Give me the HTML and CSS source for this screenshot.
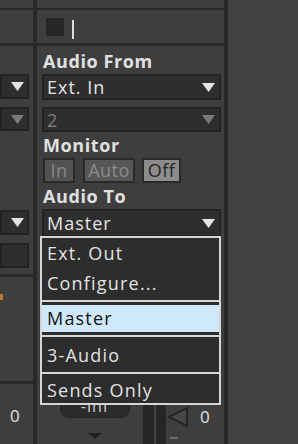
FILE: index.html
```html
<!DOCTYPE html>
<html>
<head>
<meta charset="utf-8">
<link rel="stylesheet" href="styles.css">
</head>
<body>
<div class="col-left">
  <div class="topgap"></div>
  <div class="hline2"></div>
  <div class="header"></div>
  <div class="hline3"></div>
  <div class="lsp1"></div>
  <div class="ldrop"><svg class="arrow" width="13" height="9" viewBox="0 0 13 9"><polygon points="0,0 13,0 6.5,9" fill="#e4e4e4"/></svg></div>
  <div class="ldrop dim"><svg class="arrow" width="13" height="9" viewBox="0 0 13 9"><polygon points="0,0 13,0 6.5,9" fill="#7a7a7a"/></svg></div>
  <div class="lsp2"></div>
  <div class="ldrop"><svg class="arrow" width="13" height="9" viewBox="0 0 13 9"><polygon points="0,0 13,0 6.5,9" fill="#e4e4e4"/></svg></div>
  <div class="ldrop empty"></div>
  <div class="lline a"></div>
  <div class="orange"></div>
  <div class="lline b"></div>
  <div class="lzero">0</div>
</div>
<div class="vsep"></div>
<div class="col-main">
  <div class="topgap"></div>
  <div class="hline2"></div>
  <div class="header">
    <div class="square"></div>
    <div class="cursor"></div>
  </div>
  <div class="hline3"></div>
  <div class="label first">Audio From</div>
  <div class="drop"><span>Ext. In</span><svg width="13" height="9" viewBox="0 0 13 9"><polygon points="0,0 13,0 6.5,9" fill="#e4e4e4"/></svg></div>
  <div class="drop dim"><span>2</span><svg width="13" height="9" viewBox="0 0 13 9"><polygon points="0,0 13,0 6.5,9" fill="#7a7a7a"/></svg></div>
  <div class="label">Monitor</div>
  <div class="btns">
    <div class="btn b-in">In</div>
    <div class="btn b-auto">Auto</div>
    <div class="btn b-off">Off</div>
  </div>
  <div class="label">Audio To</div>
  <div class="drop master"><span>Master</span><svg width="13" height="9" viewBox="0 0 13 9"><polygon points="0,0 13,0 6.5,9" fill="#e4e4e4"/></svg></div>
  <div class="bottom">
    <div class="pill">-inf</div>
    <div class="meter"><div class="mline"></div></div>
    <svg class="tri" width="22" height="22" viewBox="0 0 22 22"><polygon points="20,2 20,20 2,11" fill="#474747" stroke="#252525" stroke-width="2"/></svg>
    <div class="mzero">0</div>
    <svg class="down" width="14" height="6" viewBox="0 0 14 6"><polygon points="0,0 14,0 7,6" fill="#202020"/></svg>
    <div class="dash"></div>
  </div>
  <div class="menu">
    <div class="group">
      <div class="item">Ext. Out</div>
      <div class="item">Configure...</div>
    </div>
    <div class="sep"></div>
    <div class="item sel">Master</div>
    <div class="sep"></div>
    <div class="item tall">3-Audio</div>
    <div class="sep"></div>
    <div class="item last">Sends Only</div>
  </div>
</div>
<div class="vsep"></div>
<div class="col-right"></div>
</body>
</html>
```

FILE: styles.css
```css
* { box-sizing: border-box; }
html, body { margin: 0; padding: 0; }
body {
  width: 298px;
  height: 444px;
  overflow: hidden;
  display: flex;
  background: #3e3e3e;
  font-family: "Open Sans", "Lato", sans-serif;
  color: #e2e2e2;
  letter-spacing: 1px;
}
.col-left { width: 33px; display: flex; flex-direction: column; }
.vsep { width: 4px; background: #282828; flex: none; }
.col-main { width: 187px; display: flex; flex-direction: column; position: relative; }
.col-right { flex: 1; background: #424242; }

.topgap { height: 8px; }
.hline2 { height: 2px; background: #282828; }
.hline3 { height: 3px; background: #282828; }
.header { height: 33px; display: flex; align-items: flex-start; }
.square { width: 18px; height: 18px; background: #262626; margin: 8px 0 0 9px; }
.cursor { width: 2px; height: 19px; background: #dcdcdc; margin: 10px 0 0 8px; }

/* left column */
.lsp1 { height: 28px; }
.ldrop {
  width: 29px; height: 25px;
  background: #2e2e2e; border: 2px solid #232323;
  display: flex; align-items: center; justify-content: flex-end;
  padding-right: 3px;
  margin-bottom: 8px;
}
.ldrop.dim { height: 24px; }
.lsp2 { height: 71px; }
.ldrop.empty { margin-bottom: 6px; }
.lline { height: 3px; background: #2a2a2a; }
.orange { width: 3px; height: 6px; background: #b9772f; margin-top: 17px; }
.lline.b { margin-top: 81px; }
.lzero { font-size: 17px; margin: 24px 0 0 10px; line-height: 16px; }

/* main column */
.label {
  font-weight: bold;
  font-size: 18px;
  letter-spacing: 0.6px;
  line-height: 26px;
  height: 26px;
  padding-left: 6px;
  color: #e0e0e0;
}
.label.first { height: 28px; line-height: 30px; }
.drop {
  margin: 0 3px 7px 5px;
  height: 26px;
  background: #2e2e2e;
  border: 2px solid #232323;
  display: flex; align-items: center; justify-content: space-between;
  padding: 0 4px 0 3px;
  font-size: 18px;
  color: #e4e4e4;
}
.drop.dim { height: 25px; margin-bottom: 0; color: #7c7c7c; }
.drop.master { height: 28px; margin-bottom: 0; }
.btns { display: flex; height: 25px; padding-left: 6px; }
.btn {
  height: 25px; border: 2px solid #2a2a2a;
  font-size: 18px; line-height: 20px; text-align: center;
  letter-spacing: 0.5px;
}
.b-in { width: 32px; background: #525252; color: #888; }
.b-auto { width: 52px; margin-left: 8px; background: #575757; color: #8c8c8c; }
.b-off { width: 39px; margin-left: 7px; background: #8c8c8c; color: #262626; }

.bottom { position: relative; flex: 1; }
.pill {
  position: absolute; left: 23px; top: 159px; width: 70px; height: 22px;
  background: #2b2b2b; border: 1px solid #222; border-radius: 9px;
  font-size: 16px; text-align: center; line-height: 18px; color: #d0d0d0;
}
.meter { position: absolute; left: 106px; top: 160px; width: 23px; height: 60px; background: #262626; }
.mline { width: 2px; height: 100%; background: #444; margin-left: 11px; }
.tri { position: absolute; left: 130px; top: 169px; }
.mzero { position: absolute; left: 163px; top: 168px; font-size: 17px; }
.down { position: absolute; left: 51px; top: 196px; }
.dash { position: absolute; left: 133px; top: 200px; width: 8px; height: 2px; background: #6c6c6c; }

/* menu */
.menu {
  position: absolute; left: 3px; top: 236px;
  width: 181px; height: 169px;
  background: #2d2d2d;
  border: 2px solid #d6d6d6;
  display: flex; flex-direction: column;
  z-index: 2;
}
.group { height: 62px; padding-top: 0; }
.item {
  height: 30px; line-height: 30px;
  padding-left: 5px;
  font-size: 18px; color: #e2e2e2;
  letter-spacing: 1.2px;
}
.sep { height: 2px; background: #d6d6d6; flex: none; }
.item.sel {
  background: #cfe8fa; color: #121212;
  height: 27px; line-height: 27px;
  margin: 3px 0 3px 0;
}
.item.tall { height: 35px; line-height: 36px; }
.item.last { height: 29px; line-height: 32px; }
```
